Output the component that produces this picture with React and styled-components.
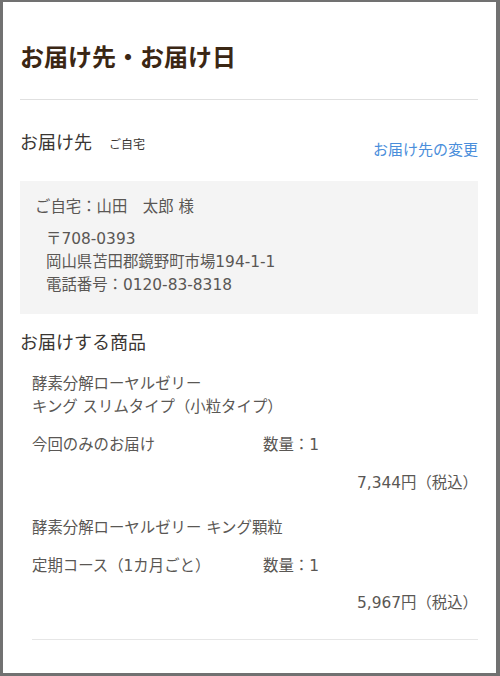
import React from "react";
import styled, { createGlobalStyle } from "styled-components";

const GlobalStyle = createGlobalStyle`
  html, body {
    margin: 0;
    padding: 0;
    background: #ffffff;
  }
  body {
    font-family: "DejaVu Sans", "Noto Sans CJK JP", sans-serif;
    color: #5a5754;
  }
`;

const Frame = styled.div`
  box-sizing: border-box;
  width: 500px;
  height: 676px;
  border-style: solid;
  border-color: #717171;
  border-width: 2px 4px 3px 3px;
  padding: 0 18px 0 17px;
  background: #fff;
  overflow: hidden;
`;

const PageTitle = styled.h1`
  margin: 0;
  padding: 38px 0 23px;
  font-size: 24px;
  line-height: 36px;
  font-weight: 700;
  color: #3b2714;
  border-bottom: 1px solid #e0e0e0;
`;

const HeaderRow = styled.div`
  display: flex;
  justify-content: space-between;
  align-items: flex-start;
  margin-top: 31px;
`;

const SectionHeading = styled.h2`
  margin: 0;
  font-size: ${(p) => (p.$size ? p.$size : 18)}px;
  line-height: ${(p) => (p.$lh ? p.$lh : 24)}px;
  font-weight: 400;
  color: #3a3633;
  margin-top: ${(p) => (p.$top ? p.$top : 0)}px;
`;

const Tag = styled.span`
  font-size: 12px;
  margin-left: 17px;
  color: #3a3633;
`;

const ChangeLink = styled.a`
  font-size: 15px;
  line-height: 22px;
  margin-top: 8px;
  color: #4a8edb;
  text-decoration: none;
  cursor: pointer;
`;

const AddressBox = styled.div`
  margin-top: 20px;
  background: #f4f4f4;
  padding: 15px 15px 17px;
  font-size: 15.4px;
  line-height: 23px;
`;

const Recipient = styled.div`
  margin-bottom: 9px;
`;

const AddressLines = styled.div`
  margin-left: 11px;
`;

const ProductList = styled.div`
  margin-left: 12px;
  padding-bottom: 24px;
  border-bottom: 1px solid #e6e6e6;
  font-size: 15.4px;
  line-height: 23px;
`;

const Product = styled.div`
  padding-top: ${(p) => (p.$first ? 17 : 22)}px;
`;

const InfoRow = styled.div`
  display: grid;
  grid-template-columns: 231px 1fr;
  margin-top: 15px;
`;

const Price = styled.div`
  margin-top: 14.5px;
  text-align: right;
`;

const products = [
  {
    name: ["酵素分解ローヤルゼリー", "キング スリムタイプ（小粒タイプ）"],
    plan: "今回のみのお届け",
    qty: 1,
    price: "7,344",
  },
  {
    name: ["酵素分解ローヤルゼリー キング顆粒"],
    plan: "定期コース（1カ月ごと）",
    qty: 1,
    price: "5,967",
  },
];

export default function App() {
  return (
    <>
      <GlobalStyle />
      <Frame>
        <PageTitle>お届け先・お届け日</PageTitle>

        <HeaderRow>
          <SectionHeading>
            お届け先<Tag>ご自宅</Tag>
          </SectionHeading>
          <ChangeLink>お届け先の変更</ChangeLink>
        </HeaderRow>

        <AddressBox>
          <Recipient>ご自宅：山田　太郎 様</Recipient>
          <AddressLines>
            <div>〒708-0393</div>
            <div>岡山県苫田郡鏡野町市場194-1-1</div>
            <div>電話番号：0120-83-8318</div>
          </AddressLines>
        </AddressBox>

        <SectionHeading $top={16} $lh={26}>
          お届けする商品
        </SectionHeading>

        <ProductList>
          {products.map((item, i) => (
            <Product key={i} $first={i === 0}>
              {item.name.map((line) => (
                <div key={line}>{line}</div>
              ))}
              <InfoRow>
                <span>{item.plan}</span>
                <span>数量：{item.qty}</span>
              </InfoRow>
              <Price>{item.price}円（税込）</Price>
            </Product>
          ))}
        </ProductList>
      </Frame>
    </>
  );
}
